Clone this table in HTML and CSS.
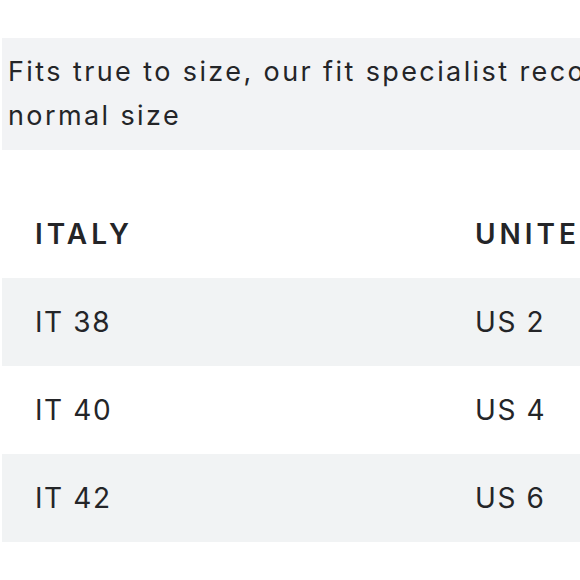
FILE: index.html
```html
<!DOCTYPE html>
<html>
<head>
<meta charset="utf-8">
<link rel="stylesheet" href="styles.css">
</head>
<body>
<div class="page">
  <div class="note">Fits true to size, our fit specialist recommends taking your normal size</div>
  <table class="sizes">
    <thead>
      <tr><th>ITALY</th><th>UNITED STATES</th><th>UK</th></tr>
    </thead>
    <tbody>
      <tr><td>IT 38</td><td>US 2</td><td>UK 6</td></tr>
      <tr><td>IT 40</td><td>US 4</td><td>UK 8</td></tr>
      <tr><td>IT 42</td><td>US 6</td><td>UK 10</td></tr>
    </tbody>
  </table>
</div>
</body>
</html>
```
FILE: styles.css
```css
html, body {
  margin: 0;
  padding: 0;
  background: #fff;
  overflow: hidden;
}
.page {
  width: 1320px;
  padding: 38px 0 0 2px;
  font-family: Inter, "Liberation Sans", sans-serif;
  color: #242528;
}
.note {
  width: 960px;
  background: #f2f3f5;
  padding: 12px 6px;
  font-size: 27px;
  line-height: 44px;
  letter-spacing: 2.4px;
}
.sizes {
  margin-top: 40px;
  border-collapse: collapse;
  width: 1320px;
}
.sizes th, .sizes td {
  height: 88px;
  padding: 0 0 0 33px;
  text-align: left;
  width: 440px;
  box-sizing: border-box;
  font-size: 28px;
  white-space: nowrap;
}
.sizes th {
  font-weight: 600;
  letter-spacing: 4px;
}
.sizes td {
  font-weight: 400;
  letter-spacing: 1.6px;
}
.sizes tbody tr:nth-child(odd) {
  background: #f1f3f4;
}
```
